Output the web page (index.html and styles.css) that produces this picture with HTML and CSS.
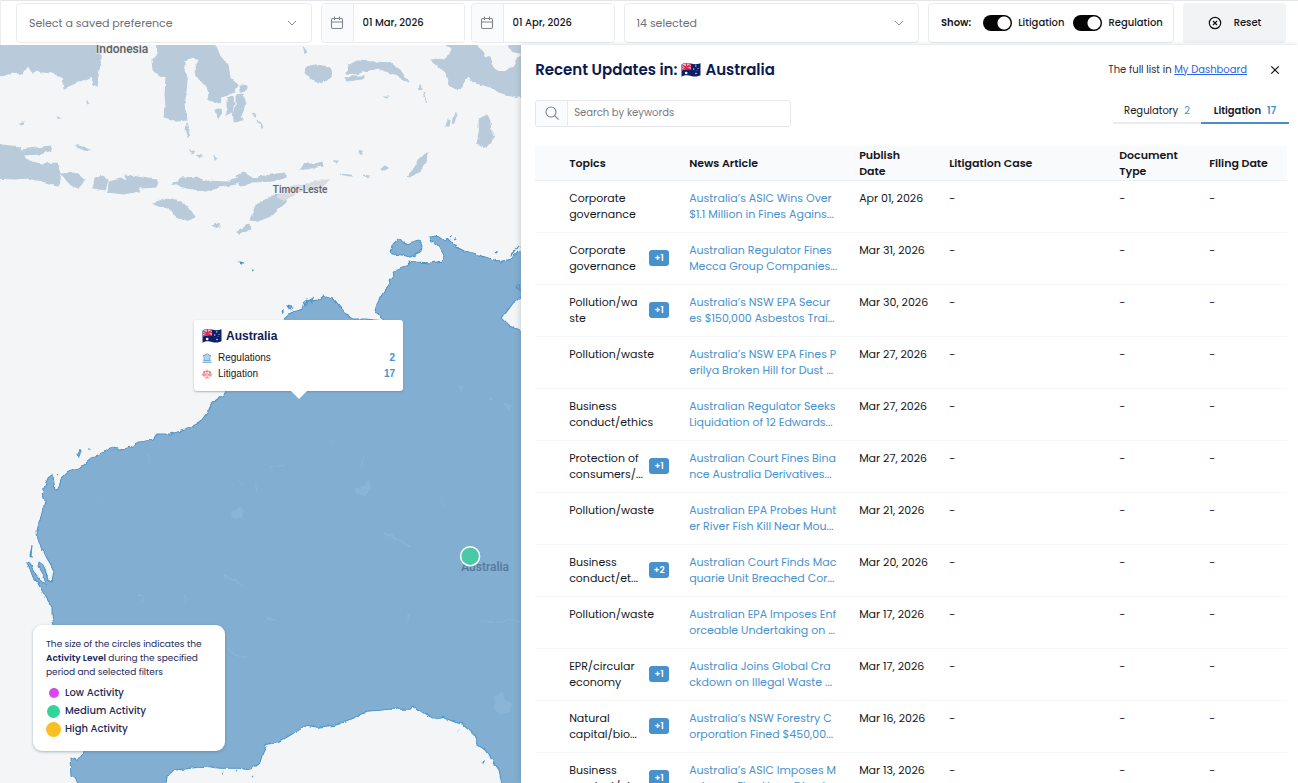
FILE: index.html
```html
<!DOCTYPE html>
<html lang="en">
<head>
<meta charset="utf-8">
<title>Recent Updates – Australia</title>
<link rel="stylesheet" href="styles.css">
</head>
<body>
<svg class="defs" aria-hidden="true">
  <symbol id="chevron" viewBox="0 0 10 10"><path d="M1 3l4 4 4-4" fill="none" stroke="#868a93"/></symbol>
  <symbol id="calendar" viewBox="0 0 14 14"><g fill="none" stroke="#7f858f" stroke-width="1.1"><rect x="1.500" y="2.500" width="11" height="10" rx="1.500"/><path d="M1.500 6h11M4.500 .5v3.500M9.500 .5v3.500"/></g></symbol>
  <symbol id="flag" viewBox="0 0 20 16">
    <path d="M.5 2.500C4 .3 7 .7 10 1.600s6 1 9.500-.4v12c-3.500 1.600-6.500 1.400-9.500.7s-6-1-9.500.9z" fill="#0b2066"/>
    <path d="M1 2.500C4 .8 7 1 10 1.700v6.100c-3-.7-6-.7-9 .8z" fill="#d9c5dc"/>
    <path d="M1 5.400c3-1.300 6-1.400 9-.8M5.500 1.200v6.200M1.200 3l8.600 4.400M9.800 2.200L1.200 8" stroke="#dc2850" stroke-width="1.100" fill="none"/>
    <circle cx="5.200" cy="11" r="1.300" fill="#fff"/>
    <g fill="#dfe4f5"><circle cx="14.800" cy="4" r=".7"/><circle cx="17" cy="6.500" r=".6"/><circle cx="12.700" cy="7" r=".7"/><circle cx="15" cy="11.500" r=".8"/><circle cx="16" cy="8.300" r=".4"/></g>
  </symbol>
</svg>

<header class="topbar">
  <div class="box select-box">
    <select aria-label="Saved preference"><option>Select a saved preference</option></select>
    <svg class="chevron" aria-hidden="true"><use href="#chevron"/></svg>
  </div>
  <div class="dates">
    <label class="box date-box"><span class="addon"><svg class="ico14" aria-hidden="true"><use href="#calendar"/></svg></span><input type="text" aria-label="From date" value="01 Mar, 2026"></label>
    <label class="box date-box"><span class="addon"><svg class="ico14" aria-hidden="true"><use href="#calendar"/></svg></span><input type="text" aria-label="To date" value="01 Apr, 2026"></label>
  </div>
  <div class="box select-box">
    <select aria-label="Topics"><option>14 selected</option></select>
    <svg class="chevron" aria-hidden="true"><use href="#chevron"/></svg>
  </div>
  <div class="box show-box">
    <strong>Show:</strong>
    <label><input type="checkbox" class="switch" checked>Litigation</label>
    <label><input type="checkbox" class="switch" checked>Regulation</label>
  </div>
  <button class="reset" type="button">
    <svg class="ico14" viewBox="0 0 14 14" aria-hidden="true"><g fill="none" stroke="#111" stroke-width="1.200"><circle cx="7" cy="7" r="5.700"/><path d="M5 5l4 4M9 5l-4 4"/></g></svg>
    Reset
  </button>
</header>

<main class="main">
  <section class="map" aria-label="Map">
    <svg class="map-canvas" viewBox="0 45 521 738" preserveAspectRatio="xMinYMin slice">
      <defs><filter id="coast" x="-5%" y="-5%" width="110%" height="110%"><feTurbulence type="fractalNoise" baseFrequency=".16" numOctaves="2" seed="4"/><feDisplacementMap in="SourceGraphic" scale="4" xChannelSelector="R" yChannelSelector="G"/></filter></defs>
      <g filter="url(#coast)">
        <g class="land-far">
          <path d="M-6 40H101V58L99 70 96 87 92 84 93 76 80 81 64 88 62 77 52 73 42 72 38 70 33 73 28 66 22 74 12 72 3 76-6 74Z"/>
          <path d="M158 40H213L220 56 228 66 230 78 238 85 234 92 222 97 219 103 209 100 208 88 199 79 195 73 199 60 192 57 184 61 184 66 186 72 187 80 186 92 184 105 187 119 176 120 164 117 166 108 165 94 166 77 160 75 153 70 152 60 157 56Z"/>
          <path d="M227 98l6-2 1 8-2 8-5 3zM236 95l6-1 3 6-1 8-3 8 2 4-9 1-1-9 3-6zM240 86l6 0-1 5-4 1zM216 109l4 0 1 6-3 3zM187 123l2 6-1 8-2-4z"/>
          <path d="M-6 144L20 147 26 160 40 164 57 163 60 172 58 186 50 184 37 180 28 178 15 179-6 178Z"/>
          <path d="M22 150L50 146 52 150 40 154 25 155zM61 174L75 173 85 180 78 188 68 183zM95 178l8-2 5 4-3 10-12-2zM109 182l12-3 10 3 10 1-2 8-15 3-16-2zM125 175l13 2 10 2 9 1-1 7-15 1-12-4z"/>
          <path d="M173 184l8-6 15-1 10 4 20 1 15-4-5 6-18 3-12 4-20-3zM236 176l8-3 8 5 12-2 20-3 3 4-14 4-20 1-12 4zM300 170l5-6 10 0 7-2 1 4-12 2zM154 203l10-4 12 1 12 7 7 10-9 4-10-4-7-9-12-2zM250 220l6-15 10-5 12-7 8 4 0 5-15 14-13 5zM237 232l12-8 1 5-11 6zM75 146l8 0 7 5-6-1zM212 226l7-3 1 3-5 2z"/>
          <path d="M306 67l10-2 14 2 2 8-10 8-10-4-7-6zM346 73l3-8 8-4 18 1 15 1 10 7 8 12-14-8-16-6-16 4-6 2zM345 79l10-3 8 0-2 3-14 2z"/>
          <path d="M437 40H528V99L501 93 487 86 475 83 467 77 463 82 462 87 456 89 450 86 448 77 443 70 436 65 432 60 444 59 450 54 452 48Z"/>
          <path d="M487 115l4 8 1 12 2 2-8 10-9-4 2-10 0-14zM414 170l6-12 7-6-1 10-8 10-12 6zM446 126l2-7 2 2-1 5zM453 125l4-12-2 0zM340 174l10 1 3 1-9 0zM381 169l4-3 3 2-5 3zM363 175l6 1-2 1z"/>
          <path d="M252 113l4 2-1 2zM258 119l5 8-1 1zM303 47l4 5-2 1zM419 85l3 3-2 1zM424 92l3 9-1 0zM359 152l3-1 1 3zM334 161l4 0-2 2zM190 150l4 2-2 2zM196 155l6 1-2 1zM214 156l3 2-2 2zM20 124l4-1-2 3zM383 97l6 0-2 1zM58 117l1-1 1 2zM87 101l2 1-2 1z"/>
        </g>
        <path class="land-grey" d="M276 197l10-10 25-5 20-3-10 8-25 6-12 8z"/>
        <path class="sea" d="M477 40H505L512 52 522 54 516 66 508 72 498 72 493 66 490 55 485 58 483 51 478 47Z"/>
        <path class="land-far" d="M528 50V99L508 93 506 72 513 67 518 58Z"/>
        <g class="land">
          <path d="M40 520L44 505 45 500 42 493 48 478 53 474 54 484 55 490 58 489 61 479 68 472 80 468 92 458 105 451 112 446 120 450 130 447 138 442 152 440 157 434 170 434 185 430 200 422 207 413 212 403 224 394 240 375 260 350 285 318 292 312 303 309 305 302 312 301 318 300 323 295 333 298 341 308 348 316 353 319 365 319 385 321 378 315 375 310 378 301 385 290 390 283 389 280 397 270 410 265 409 261 416 262 432 263 441 261 444 256 440 247 430 241 429 237 437 236 445 241 447 238 455 246 462 250 475 254 485 257 500 262 510 259 530 243V290L522 296 513 303 502 318 510 326 530 334V795H504L499 770 490 757 485 750 478 745 475 735 468 728 463 724 455 722 443 717 435 719 425 714 413 706 410 709 390 709 367 711 350 719 335 725 317 727 307 725 297 731 280 741 267 744 263 752 260 762 250 770 240 768 220 768 205 766 190 768 175 770 167 777 163 795H85L75 778 71 776 70 758 78 760 84 752 80 700 54 625 52 615 52 607 43 592 38 583 33 577 30 569 27 562 29 561 34 572 42 582 46 585 44 577 38 567 39 562 43 565 46 571 48 580 52 582 54 571 50 563 47 558 43 550 38 540 37 530Z"/>
          <path d="M391 252l2-8 5-5 8 5 12-4 4 5-3 8-9 4-8-2-10-1zM30 556l2-11 0 1-1 11zM78 454l2-5 1 3-2 4zM239 262l5 1-4 0zM252 269l1 0 0 1zM282 311l1 3 0-4zM287 306l5 1-2 3zM303 302l4-2-2 6zM310 300l4-3-3 6zM510 255l9-9-8 10zM516 286l3-2 1 8zM450 237l1-2 0 1zM453 240l2-2 0 1zM496 253l1-2 0 1zM88 449l3 0zM57 475l1-1zM482 762l2-1-1 2zM458 731l1-1zM251 777l2-2zM222 773l1-1zM236 771l1-1z"/>
        </g>
        <g class="lakes">
          <path d="M232 511l7-4 5 3-2 6-6 4-4-5zM355 489l10-4 4-6 2 10-6 7-9-2zM460 384l4 3-3 5-3-4zM490 397l3 2-3 3zM503 402l9 4-4 6zM407 613l3 2-2 8zM494 696l8-4 3 8 8 2-4 10-10 3-5-8zM224 574l12 5 8 8-7-4-14-7zM382 531l15 6 13 9-1 2-10-8-14-5zM264 608l2 8 14 5-13-2zM331 437l3 5-2-1z"/>
          <path d="M270 467l16-2M184 593l3 12M138 594l5 2 0 5M227 648l8 7 12 3M482 620l15 3 10-4 14 3M360 468l5-12M440 499l4 8M147 455l3 5M95 500l6-2M238 480l4 4M255 483l2 8" class="streams"/>
        </g>
      </g>
      <text class="map-label big" x="122" y="53">Indonesia</text>
      <text class="map-label" x="300" y="193">Timor-Leste</text>
      <text class="map-label au" x="485" y="571">Australia</text>
      <circle cx="470" cy="556" r="9.500" fill="#4bc8a8" stroke="#fff" stroke-width="1.500"/>
    </svg>

    <div class="tooltip">
      <h2><svg class="flag" aria-hidden="true"><use href="#flag"/></svg>Australia</h2>
      <dl>
        <div><dt><svg class="ico10" viewBox="0 0 10 10" aria-hidden="true"><g fill="none" stroke="#5598cc" stroke-width=".9"><path d="M1 3L5 .8 9 3zM.5 9.300h9M1.300 7.700h7.400M2.200 4v3.500M4 4v3.500M6 4v3.500M7.800 4v3.500"/></g></svg>Regulations</dt><dd>2</dd></div>
        <div><dt><svg class="ico10" viewBox="0 0 10 10" aria-hidden="true"><g fill="none" stroke="#f0696e" stroke-width=".9"><path d="M5 .8v7.500M2 2.300h6M3 8.800h4M2 2.500L.7 5.800h2.800zM8 2.500L6.500 5.800h2.800zM.7 6c.3 1.500 2.500 1.500 2.800 0M6.500 6c.3 1.500 2.500 1.500 2.800 0"/></g></svg>Litigation</dt><dd>17</dd></div>
      </dl>
    </div>

    <aside class="legend">
      <p>The size of the circles indicates the <b>Activity Level</b> during the specified period and selected filters</p>
      <ul>
        <li><i><span class="dot low"></span></i>Low Activity</li>
        <li><i><span class="dot medium"></span></i>Medium Activity</li>
        <li><i><span class="dot high"></span></i>High Activity</li>
      </ul>
    </aside>
  </section>

  <section class="panel">
    <div class="panel-head">
      <h1>Recent Updates in: <svg class="flag" aria-hidden="true"><use href="#flag"/></svg> Australia</h1>
      <p>The full list in <a href="#dashboard">My Dashboard</a></p>
      <button class="close" type="button" aria-label="Close"><svg class="ico10" viewBox="0 0 10 10" aria-hidden="true"><path d="M1.300 1.300l7.400 7.400M8.700 1.300L1.300 8.700" stroke="#111" stroke-width="1.200"/></svg></button>
    </div>
    <div class="tools">
      <label class="search"><span class="addon"><svg class="ico14" viewBox="0 0 14 14" aria-hidden="true"><g fill="none" stroke="#7f858f" stroke-width="1.100"><circle cx="6" cy="6" r="5"/><path d="M9.600 9.600l4 4"/></g></svg></span><input type="text" aria-label="Search by keywords" placeholder="Search by keywords"></label>
      <div class="tabs" role="tablist">
        <button type="button" role="tab">Regulatory <span>2</span></button>
        <button type="button" role="tab" class="active" aria-selected="true">Litigation <span>17</span></button>
      </div>
    </div>
    <table class="updates">
      <colgroup><col class="c-pad"><col class="c-topic"><col class="c-news"><col class="c-date"><col class="c-case"><col class="c-type"><col class="c-filing"></colgroup>
      <thead><tr><th></th><th>Topics</th><th>News Article</th><th>Publish<br>Date</th><th>Litigation Case</th><th>Document<br>Type</th><th>Filing Date</th></tr></thead>
      <tbody>
        <tr><td></td><td><div class="topic"><span>Corporate<br>governance</span></div></td><td><a href="#n1">Australia’s ASIC Wins Over<br>$1.1 Million in Fines Agains...</a></td><td>Apr 01, 2026</td><td>-</td><td>-</td><td>-</td></tr>
        <tr><td></td><td><div class="topic"><span>Corporate<br>governance</span><b class="more">+1</b></div></td><td><a href="#n2">Australian Regulator Fines<br>Mecca Group Companies...</a></td><td>Mar 31, 2026</td><td>-</td><td>-</td><td>-</td></tr>
        <tr><td></td><td><div class="topic"><span>Pollution/wa<br>ste</span><b class="more">+1</b></div></td><td><a href="#n3">Australia’s NSW EPA Secur<br>es $150,000 Asbestos Trai...</a></td><td>Mar 30, 2026</td><td>-</td><td>-</td><td>-</td></tr>
        <tr><td></td><td><div class="topic"><span>Pollution/waste</span></div></td><td><a href="#n4">Australia’s NSW EPA Fines P<br>erilya Broken Hill for Dust ...</a></td><td>Mar 27, 2026</td><td>-</td><td>-</td><td>-</td></tr>
        <tr><td></td><td><div class="topic"><span>Business<br>conduct/ethics</span></div></td><td><a href="#n5">Australian Regulator Seeks<br>Liquidation of 12 Edwards...</a></td><td>Mar 27, 2026</td><td>-</td><td>-</td><td>-</td></tr>
        <tr><td></td><td><div class="topic"><span>Protection of<br>consumers/...</span><b class="more">+1</b></div></td><td><a href="#n6">Australian Court Fines Bina<br>nce Australia Derivatives...</a></td><td>Mar 27, 2026</td><td>-</td><td>-</td><td>-</td></tr>
        <tr><td></td><td><div class="topic"><span>Pollution/waste</span></div></td><td><a href="#n7">Australian EPA Probes Hunt<br>er River Fish Kill Near Mou...</a></td><td>Mar 21, 2026</td><td>-</td><td>-</td><td>-</td></tr>
        <tr><td></td><td><div class="topic"><span>Business<br>conduct/et...</span><b class="more">+2</b></div></td><td><a href="#n8">Australian Court Finds Mac<br>quarie Unit Breached Cor...</a></td><td>Mar 20, 2026</td><td>-</td><td>-</td><td>-</td></tr>
        <tr><td></td><td><div class="topic"><span>Pollution/waste</span></div></td><td><a href="#n9">Australian EPA Imposes Enf<br>orceable Undertaking on ...</a></td><td>Mar 17, 2026</td><td>-</td><td>-</td><td>-</td></tr>
        <tr><td></td><td><div class="topic"><span>EPR/circular<br>economy</span><b class="more">+1</b></div></td><td><a href="#n10">Australia Joins Global Cra<br>ckdown on Illegal Waste ...</a></td><td>Mar 17, 2026</td><td>-</td><td>-</td><td>-</td></tr>
        <tr><td></td><td><div class="topic"><span>Natural<br>capital/bio...</span><b class="more">+1</b></div></td><td><a href="#n11">Australia’s NSW Forestry C<br>orporation Fined $450,00...</a></td><td>Mar 16, 2026</td><td>-</td><td>-</td><td>-</td></tr>
        <tr><td></td><td><div class="topic"><span>Business<br>conduct/et...</span><b class="more">+1</b></div></td><td><a href="#n12">Australia’s ASIC Imposes M<br>aximum Fine Upon Direct...</a></td><td>Mar 13, 2026</td><td>-</td><td>-</td><td>-</td></tr>
      </tbody>
    </table>
  </section>
</main>
</body>
</html>
```
FILE: styles.css
```css
* { box-sizing: border-box; }
body {
  margin: 0;
  height: 100vh;
  display: flex;
  flex-direction: column;
  overflow: hidden;
  background: #fff;
  color: #15171c;
  font: 11px/16px Poppins, Inter, sans-serif;
}
h1, h2, p, dl, dd, ul { margin: 0; padding: 0; }
button, input, select { font: inherit; color: inherit; }
.defs { display: none; }
.ico14 { width: 14px; height: 14px; flex: none; }
.ico10 { width: 10px; height: 10px; flex: none; }
.flag { width: 20px; height: 16px; flex: none; }

/* Filter bar */
.topbar {
  display: flex;
  gap: 9px;
  padding: 2px 12px 2px 15px;
  border-top: 1px solid #e4e5e9;
  border-left: 1px solid #eceef0;
}
.box {
  height: 40px;
  border: 1px solid #e9ebef;
  border-radius: 4px;
  background: #fff;
}
.select-box { flex: 1; display: grid; align-items: center; }
.select-box > * { grid-area: 1 / 1; }
.select-box select {
  width: 100%;
  height: 100%;
  padding: 0 12px;
  border: 0;
  background: none;
  appearance: none;
  color: #6b7078;
}
.chevron { width: 10px; height: 10px; justify-self: end; margin-right: 14px; pointer-events: none; }
.dates { display: flex; gap: 6px; }
.date-box { display: flex; width: 144px; overflow: hidden; }
.addon {
  flex: none;
  display: flex;
  align-items: center;
  justify-content: center;
  width: 32px;
  background: #fafbfd;
  border-right: 1px solid #e9ebef;
}
.date-box input { width: 100%; min-width: 0; border: 0; padding: 0 9px; font-weight: 500; font-size: 10px; }
.show-box { display: flex; align-items: center; gap: 9px; padding: 0 12px; width: 246px; white-space: nowrap; font-size: 10px; font-weight: 500; }
.show-box strong { font-weight: 600; margin-right: 3px; }
.show-box label { display: flex; align-items: center; gap: 6px; }
.switch {
  appearance: none;
  width: 29px;
  height: 16px;
  margin: 0;
  border-radius: 8px;
  background: radial-gradient(circle at 21px 8px, #fff 6px, #050505 7px);
}
.reset {
  width: 103px;
  display: flex;
  align-items: center;
  justify-content: center;
  gap: 12px;
  border: 0;
  border-radius: 3px;
  background: #f1f3f5;
  font-size: 10px;
  font-weight: 500;
}

/* Map */
.main { flex: 1; min-height: 0; display: flex; }
.map { position: relative; flex: 0 0 40.15%; background: #f3f5f6; overflow: hidden; }
.map-canvas { display: block; width: 100%; height: 100%; }
.land-far { fill: #b9cbda; stroke: #b9cbda; stroke-width: 1; }
.land-grey { fill: #d8dce0; }
.sea { fill: #f3f5f6; }
.land { fill: #81aed1; stroke: #4b93c8; stroke-width: 1; }
.lakes { fill: #8ab5d6; }
.streams { fill: none; stroke: #8cb7d7; }
.map-label { font: 500 10px Roboto, sans-serif; fill: #5e6369; text-anchor: middle; paint-order: stroke; stroke: #e8edf1; stroke-width: 1px; }
.map-label.big { font-size: 12px; }
.map-label.au { font-size: 12px; fill: #56799a; stroke: none; }
.tooltip {
  position: absolute;
  left: 194px;
  top: 275px;
  width: 209px;
  height: 71px;
  padding: 8px;
  border-radius: 3px;
  background: #fff;
  box-shadow: 0 1px 2px #5c7c9680;
  font: 10px/16px "Liberation Sans", sans-serif;
}
.tooltip::after {
  content: "";
  position: absolute;
  left: 97px;
  top: 100%;
  border: 8px solid transparent;
  border-top-color: #fff;
  border-bottom: 0;
}
.tooltip h2 { display: flex; align-items: center; gap: 4px; margin-bottom: 6px; font-size: 12px; line-height: 16px; color: #0d2158; }
.tooltip dl div { display: flex; justify-content: space-between; }
.tooltip dt { display: flex; align-items: center; gap: 6px; }
.tooltip dd { font-weight: 700; color: #4791cc; }
.legend {
  position: absolute;
  left: 33px;
  bottom: 32px;
  width: 192px;
  padding: 12px 12px 13px 13px;
  border-radius: 9px;
  background: #fff;
  box-shadow: 0 1px 3px #3d5d7866;
  color: #1b2a58;
  font-size: 9px;
  line-height: 14px;
}
.legend b { font-weight: 600; }
.legend ul { list-style: none; margin-top: 5px; font-size: 10px; font-weight: 500; line-height: 18px; }
.legend li { display: flex; align-items: center; gap: 4px; }
.legend i { width: 15px; display: flex; justify-content: center; }
.dot { border-radius: 50%; }
.low { width: 10px; height: 10px; background: #d946ef; }
.medium { width: 13px; height: 13px; background: #34d399; }
.high { width: 15px; height: 15px; background: #fbbf24; }

/* Updates panel */
.panel { position: relative; flex: 1; min-width: 0; padding: 0 9px 0 14px; background: #fff; box-shadow: -1px 0 5px #56606b40; overflow: hidden; }
.panel-head { display: flex; align-items: center; height: 49px; font-size: 10px; color: #2b2f36; }
.panel-head h1 { display: flex; align-items: center; gap: 4px; margin-right: auto; font-size: 15px; line-height: 20px; font-weight: 600; color: #0b1a4f; }
.panel-head a { color: #2f62e6; text-decoration: underline; }
.close { display: flex; padding: 5px; margin: 0 4px 0 18px; border: 0; background: none; }
.tools { display: flex; justify-content: space-between; align-items: center; height: 38px; margin-bottom: 14px; }
.search { display: flex; width: 256px; height: 27px; border: 1px solid #e5e7eb; border-radius: 3px; overflow: hidden; }
.search input { flex: 1; min-width: 0; border: 0; padding: 0 6px; font-size: 10px; }
.search input::placeholder { color: #767a80; opacity: 1; }
.tabs { display: flex; }
.tabs button { display: flex; gap: 6px; justify-content: center; width: 88px; height: 22px; padding: 1px 0 0; border: 0; border-bottom: 2px solid #e9ebef; background: none; font-size: 10px; line-height: 16px; }
.tabs span { color: #4791cc; }
.tabs .active { font-weight: 600; border-color: #4b8fc6; }
.updates { width: calc(100% - 2px); border-collapse: separate; border-spacing: 0; table-layout: fixed; white-space: nowrap; }
.c-pad { width: 24px; }
.c-topic { width: 120px; }
.c-news { width: 170px; }
.c-date { width: 90px; }
.c-case { width: 170px; }
.c-type { width: 90px; }
.updates th { height: 35px; padding: 1px 10px; text-align: left; vertical-align: middle; font-weight: 600; background: #f9fafc; border-bottom: 1px solid #eceef1; }
.updates td { height: 52px; padding: 9px 10px 10px; vertical-align: top; border-bottom: 1px solid #f5f6f7; }
.updates th:first-child, .updates td:first-child { padding: 0; }
.updates td a { color: #4791cc; text-decoration: none; }
.topic { display: flex; align-items: center; justify-content: space-between; }
.more { flex: none; width: 20px; border-radius: 3px; background: #4791cc; color: #fff; text-align: center; font-size: 9px; font-weight: 600; }
```
